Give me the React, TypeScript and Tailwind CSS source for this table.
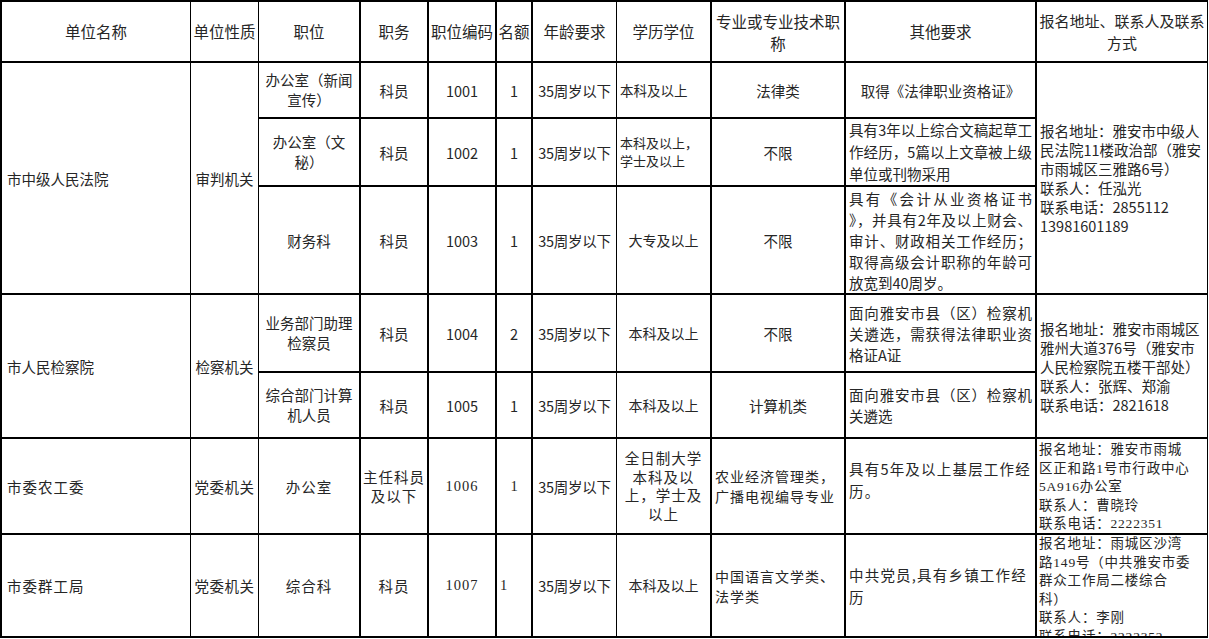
import React from "react";

// right border per column: thin lines where the sheet has them, thick elsewhere
const R = [
  "border-r",
  "border-r",
  "border-r-2",
  "border-r-2",
  "border-r-2",
  "border-r-2",
  "border-r",
  "border-r-2",
  "border-r-2",
  "border-r-2",
  "border-r",
];

type CellProps = {
  col: number;
  children?: React.ReactNode;
  className?: string;
};

function Cell({ col, children, className = "" }: CellProps) {
  return (
    <div className={`flex overflow-hidden border-b-2 border-black ${R[col]} ${className}`}>
      {children}
    </div>
  );
}

function Lines({ items, justify = false }: { items: string[]; justify?: boolean }) {
  return (
    <div className="w-full">
      {items.map((t, i) => (
        <div
          key={i}
          className={
            justify && i < items.length - 1
              ? "whitespace-nowrap text-justify [text-align-last:justify]"
              : "whitespace-nowrap"
          }
        >
          {t}
        </div>
      ))}
    </div>
  );
}

const center = "items-center justify-center text-center";
const left = "items-center justify-start text-left px-[3px]";

export default function App() {
  return (
    <div className="w-[1209px] h-[639px] overflow-hidden bg-white text-[#262626] font-['Noto_Sans_CJK_SC',sans-serif]">
      <div className="grid w-[1208px] grid-cols-[189px_68px_102px_68px_68px_36px_84px_95px_134px_191px_171px] grid-rows-[61px_56px_68px_108px_78px_66px_96px_103px] border-t-2 border-l-2 border-black text-[14.5px] leading-[21px]">
        {/* header */}
        <Cell col={0} className={`${center} border-b text-[15.5px]`}>单位名称</Cell>
        <Cell col={1} className={`${center} border-b text-[15.5px]`}>单位性质</Cell>
        <Cell col={2} className={`${center} border-b text-[15.5px]`}>职位</Cell>
        <Cell col={3} className={`${center} border-b text-[15.5px]`}>职务</Cell>
        <Cell col={4} className={`${center} border-b text-[15.5px]`}>职位编码</Cell>
        <Cell col={5} className={`${center} border-b text-[15.5px]`}>名额</Cell>
        <Cell col={6} className={`${center} border-b text-[15.5px]`}>年龄要求</Cell>
        <Cell col={7} className={`${center} border-b text-[15.5px]`}>学历学位</Cell>
        <Cell col={8} className={`${center} border-b text-[15.5px] leading-[22px]`}>
          <Lines items={["专业或专业技术职", "称"]} />
        </Cell>
        <Cell col={9} className={`${center} border-b text-[15.5px]`}>其他要求</Cell>
        <Cell col={10} className={`${center} border-b text-[15px] leading-[22px]`}>
          <Lines items={["报名地址、联系人及联系", "方式"]} />
        </Cell>

        {/* 市中级人民法院 */}
        <Cell col={0} className={`${left} row-span-3 pl-[5px]`}>市中级人民法院</Cell>
        <Cell col={1} className={`${center} row-span-3`}>审判机关</Cell>
        <Cell col={2} className={`${center} leading-[20px]`}>
          <Lines items={["办公室（新闻", "宣传）"]} />
        </Cell>
        <Cell col={3} className={center}>科员</Cell>
        <Cell col={4} className={center}>1001</Cell>
        <Cell col={5} className={center}>1</Cell>
        <Cell col={6} className={`${center} tracking-[-0.3px]`}>35周岁以下</Cell>
        <Cell col={7} className={`${left} text-[13.5px] px-[2px]`}>本科及以上</Cell>
        <Cell col={8} className={center}>法律类</Cell>
        <Cell col={9} className={center}>取得《法律职业资格证》</Cell>
        <Cell col={10} className={`${left} row-span-3 leading-[19px]`}>
          <Lines
            items={[
              "报名地址：雅安市中级人",
              "民法院11楼政治部（雅安",
              "市雨城区三雅路6号）",
              "联系人：任泓光",
              "联系电话：2855112",
              "13981601189",
            ]}
          />
        </Cell>

        <Cell col={2} className={`${center} leading-[20px]`}>
          <Lines items={["办公室（文", "秘）"]} />
        </Cell>
        <Cell col={3} className={center}>科员</Cell>
        <Cell col={4} className={center}>1002</Cell>
        <Cell col={5} className={center}>1</Cell>
        <Cell col={6} className={`${center} tracking-[-0.3px]`}>35周岁以下</Cell>
        <Cell col={7} className={`${left} text-[13px] leading-[18px] px-[2px]`}>
          <Lines items={["本科及以上，", "学士及以上"]} />
        </Cell>
        <Cell col={8} className={center}>不限</Cell>
        <Cell col={9} className={`${left} leading-[22px]`}>
          <Lines justify items={["具有3年以上综合文稿起草工", "作经历，5篇以上文章被上级", "单位或刊物采用"]} />
        </Cell>

        <Cell col={2} className={center}>财务科</Cell>
        <Cell col={3} className={center}>科员</Cell>
        <Cell col={4} className={center}>1003</Cell>
        <Cell col={5} className={center}>1</Cell>
        <Cell col={6} className={`${center} tracking-[-0.3px]`}>35周岁以下</Cell>
        <Cell col={7} className={`${center} text-[14px]`}>大专及以上</Cell>
        <Cell col={8} className={center}>不限</Cell>
        <Cell col={9} className={`${left} leading-[21px]`}>
          <Lines
            justify
            items={[
              "具有《会计从业资格证书",
              "》，并具有2年及以上财会、",
              "审计、财政相关工作经历；",
              "取得高级会计职称的年龄可",
              "放宽到40周岁。",
            ]}
          />
        </Cell>

        {/* 市人民检察院 */}
        <Cell col={0} className={`${left} row-span-2 pl-[5px]`}>市人民检察院</Cell>
        <Cell col={1} className={`${center} row-span-2`}>检察机关</Cell>
        <Cell col={2} className={`${center} leading-[20px]`}>
          <Lines items={["业务部门助理", "检察员"]} />
        </Cell>
        <Cell col={3} className={center}>科员</Cell>
        <Cell col={4} className={center}>1004</Cell>
        <Cell col={5} className={center}>2</Cell>
        <Cell col={6} className={`${center} tracking-[-0.3px]`}>35周岁以下</Cell>
        <Cell col={7} className={`${center} text-[14px]`}>本科及以上</Cell>
        <Cell col={8} className={center}>不限</Cell>
        <Cell col={9} className={`${left} leading-[21px]`}>
          <Lines justify items={["面向雅安市县（区）检察机", "关遴选，需获得法律职业资", "格证A证"]} />
        </Cell>
        <Cell col={10} className={`${left} row-span-2 leading-[19px]`}>
          <Lines
            items={[
              "报名地址：雅安市雨城区",
              "雅州大道376号（雅安市",
              "人民检察院五楼干部处）",
              "联系人：张辉、郑渝",
              "联系电话：2821618",
            ]}
          />
        </Cell>

        <Cell col={2} className={`${center} leading-[20px]`}>
          <Lines items={["综合部门计算", "机人员"]} />
        </Cell>
        <Cell col={3} className={center}>科员</Cell>
        <Cell col={4} className={center}>1005</Cell>
        <Cell col={5} className={center}>1</Cell>
        <Cell col={6} className={`${center} tracking-[-0.3px]`}>35周岁以下</Cell>
        <Cell col={7} className={`${center} text-[14px]`}>本科及以上</Cell>
        <Cell col={8} className={center}>计算机类</Cell>
        <Cell col={9} className={`${left} leading-[21px]`}>
          <Lines justify items={["面向雅安市县（区）检察机", "关遴选"]} />
        </Cell>

        {/* 市委农工委 */}
        <Cell col={0} className={`${left} pl-[5px] tracking-[1px]`}>市委农工委</Cell>
        <Cell col={1} className={`${center} tracking-[0.5px]`}>党委机关</Cell>
        <Cell col={2} className={`${center} tracking-[1px]`}>办公室</Cell>
        <Cell col={3} className={`${center} leading-[19px] tracking-[1px]`}>
          <Lines items={["主任科员", "及以下"]} />
        </Cell>
        <Cell col={4} className={`${center} font-['Liberation_Serif',serif] tracking-[1px]`}>1006</Cell>
        <Cell col={5} className={`${center} font-['Liberation_Serif',serif]`}>1</Cell>
        <Cell col={6} className={`${center} tracking-[-0.3px]`}>35周岁以下</Cell>
        <Cell col={7} className={`${center} leading-[18.5px] tracking-[1px]`}>
          <Lines items={["全日制大学", "本科及以", "上，学士及", "以上"]} />
        </Cell>
        <Cell col={8} className={`${left} leading-[20px] tracking-[1px] text-[14px]`}>
          <Lines items={["农业经济管理类，", "广播电视编导专业"]} />
        </Cell>
        <Cell col={9} className={`${left} leading-[22px] tracking-[1.2px] pb-[12px]`}>
          <Lines items={["具有5年及以上基层工作经", "历。"]} />
        </Cell>
        <Cell col={10} className="items-start justify-start text-left px-[2px] pt-[2px] text-[13.5px] leading-[18.5px] tracking-[0.8px] font-['Liberation_Serif','Noto_Sans_CJK_SC',serif]">
          <Lines
            items={[
              "报名地址：雅安市雨城",
              "区正和路1号市行政中心",
              "5A916办公室",
              "联系人：曹晓玲",
              "联系电话：2222351",
            ]}
          />
        </Cell>

        {/* 市委群工局 */}
        <Cell col={0} className={`${left} pl-[5px] tracking-[1px]`}>市委群工局</Cell>
        <Cell col={1} className={`${center} tracking-[0.5px]`}>党委机关</Cell>
        <Cell col={2} className={`${center} tracking-[1px]`}>综合科</Cell>
        <Cell col={3} className={`${center} tracking-[1px]`}>科员</Cell>
        <Cell col={4} className={`${center} font-['Liberation_Serif',serif] tracking-[1px]`}>1007</Cell>
        <Cell col={5} className={`${left} font-['Liberation_Serif',serif]`}>1</Cell>
        <Cell col={6} className={`${center} tracking-[-0.3px]`}>35周岁以下</Cell>
        <Cell col={7} className={`${center} text-[14px]`}>本科及以上</Cell>
        <Cell col={8} className={`${left} leading-[20px] tracking-[1px] text-[14px]`}>
          <Lines items={["中国语言文学类、", "法学类"]} />
        </Cell>
        <Cell col={9} className={`${left} leading-[22px] tracking-[1.2px]`}>
          <Lines items={["中共党员,具有乡镇工作经", "历"]} />
        </Cell>
        <Cell col={10} className="items-start justify-start text-left px-[2px] pt-0 text-[13.5px] leading-[18.5px] tracking-[0.8px] font-['Liberation_Serif','Noto_Sans_CJK_SC',serif]">
          <Lines
            items={[
              "报名地址：雨城区沙湾",
              "路149号（中共雅安市委",
              "群众工作局二楼综合",
              "科）",
              "联系人：李刚",
              "联系电话：2222352",
            ]}
          />
        </Cell>
      </div>
    </div>
  );
}
